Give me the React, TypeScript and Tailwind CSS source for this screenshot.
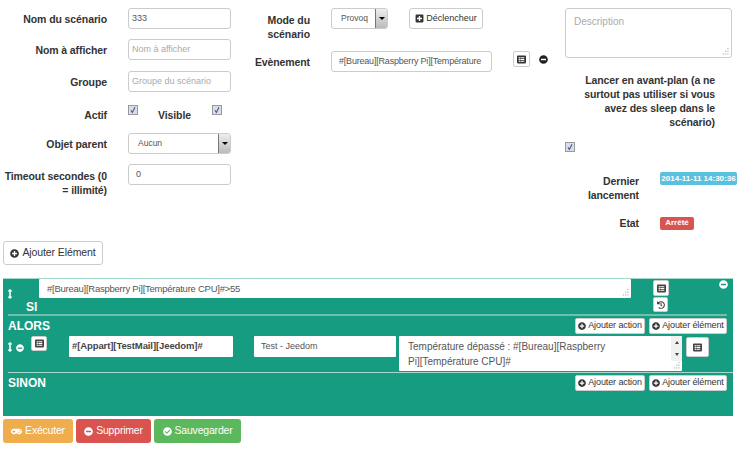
import { ReactNode } from "react"
import { FaArrowsAltV, FaCheckCircle, FaGamepad, FaHistory, FaListAlt, FaMinusCircle, FaPlusCircle, FaPlusSquare } from "react-icons/fa"

function Checkbox() {
  return (
    <div className="w-[10px] h-[10px] border border-[#9a9a9a] bg-[#dcdde4] flex items-center justify-center shrink-0">
      <svg viewBox="0 0 10 10" className="w-[8px] h-[8px]">
        <path d="M2.5 5.5 L4.2 8 L7.5 1.5" fill="none" stroke="#3d5fa8" strokeWidth="1.4" />
      </svg>
    </div>
  )
}

function Label({ className, children }: { className: string; children: ReactNode }) {
  return <div className={`text-right font-bold text-[10.5px] leading-[14px] tracking-[-0.1px] text-[#333] ${className}`}>{children}</div>
}

function TextInput({ className, value, placeholder }: { className: string; value?: string; placeholder?: string }) {
  return (
    <div className={`h-[21px] flex items-center bg-white border border-[#ccc] rounded-[3px] px-[3px] text-[9px] whitespace-nowrap overflow-hidden ${value ? "text-[#555]" : "text-[#aaa]"} ${className}`}>
      {value || placeholder}
    </div>
  )
}

function SelectBox({ className, value }: { className: string; value: string }) {
  return (
    <div className={`h-[21px] flex bg-white border border-[#ccc] rounded-[3px] text-[8.5px] text-[#555] ${className}`}>
      <div className="flex-1 flex items-center pl-[9px]">{value}</div>
      <div className="w-[12px] border-l border-[#777] bg-gradient-to-b from-[#eee] to-[#bbb] flex items-center justify-center rounded-r-[2px]">
        <div className="w-0 h-0 border-l-[3px] border-r-[3px] border-t-[3px] border-l-transparent border-r-transparent border-t-black" />
      </div>
    </div>
  )
}

function SmallButton({ children, className }: { children: ReactNode; className: string }) {
  return (
    <div className={`flex items-center justify-center bg-white border border-[#ccc] rounded-[2px] text-[#333] whitespace-nowrap shrink-0 ${className}`}>
      {children}
    </div>
  )
}

function AddButtons() {
  return (
    <div className="flex gap-[4px] ml-auto">
      <SmallButton className="w-[70px] h-[16px] gap-[2px] text-[9px] tracking-[-0.1px]">
        <FaPlusCircle className="text-[8px]" /> Ajouter action
      </SmallButton>
      <SmallButton className="w-[78px] h-[16px] gap-[2px] text-[9px] tracking-[-0.1px]">
        <FaPlusCircle className="text-[8px]" /> Ajouter élément
      </SmallButton>
    </div>
  )
}

function Grip() {
  return <div className="w-[10px] h-[10px] flex items-center justify-center"><FaArrowsAltV className="text-white text-[10px]" /></div>
}

function Resize() {
  return (
    <svg viewBox="0 0 10 10" className="absolute right-[1px] bottom-[1px] w-[9px] h-[9px]">
      <g fill="#bbb">
        <rect x="7" y="1" width="1.4" height="1.4" />
        <rect x="4.5" y="4" width="1.4" height="1.4" />
        <rect x="7" y="4" width="1.4" height="1.4" />
        <rect x="2" y="7" width="1.4" height="1.4" />
        <rect x="4.5" y="7" width="1.4" height="1.4" />
        <rect x="7" y="7" width="1.4" height="1.4" />
      </g>
    </svg>
  )
}

function ActionButton({ className, children }: { className: string; children: ReactNode }) {
  return (
    <div className={`h-[24px] flex items-center justify-center gap-[3px] rounded-[3px] text-white text-[10.5px] tracking-[-0.2px] ${className}`}>
      {children}
    </div>
  )
}

export default function App() {
  return (
    <div className="w-[740px] h-[454px] bg-white overflow-hidden font-['Liberation_Sans',Arial,sans-serif]">
      <div className="h-[241px] flex pt-[8px]">
        {/* left column */}
        <div className="w-[240px] pl-[3px] flex flex-col">
          <div className="flex gap-[21px] items-center h-[21px]">
            <Label className="w-[104px]">Nom du scénario</Label>
            <TextInput className="w-[103px] text-[9.5px]" value="333" />
          </div>
          <div className="flex gap-[21px] items-center h-[21px] mt-[10px]">
            <Label className="w-[104px]">Nom à afficher</Label>
            <TextInput className="w-[103px]" placeholder="Nom à afficher" />
          </div>
          <div className="flex gap-[21px] items-center h-[21px] mt-[11px]">
            <Label className="w-[104px]">Groupe</Label>
            <TextInput className="w-[103px]" placeholder="Groupe du scénario" />
          </div>
          <div className="flex h-[21px] mt-[13px]">
            <Label className="w-[104px] pt-[3px]">Actif</Label>
            <div className="ml-[21px]"><Checkbox /></div>
            <Label className="w-[53px] pt-[3px]">Visible</Label>
            <div className="ml-[21px]"><Checkbox /></div>
          </div>
          <div className="flex gap-[21px] items-center h-[21px] mt-[7px]">
            <Label className="w-[104px]">Objet parent</Label>
            <SelectBox className="w-[103px]" value="Aucun" />
          </div>
          <div className="flex gap-[21px] mt-[10px]">
            <Label className="w-[104px] pt-[5px]">Timeout secondes (0 = illimité)</Label>
            <TextInput className="w-[103px] pl-[7px]" value="0" />
          </div>
        </div>
        {/* middle column */}
        <div className="w-[325px] flex flex-col">
          <div className="flex">
            <Label className="w-[70px] pt-[5px]">Mode du scénario</Label>
            <SelectBox className="w-[57px] ml-[21px]" value="Provoq" />
            <SmallButton className="w-[74px] h-[21px] ml-[21px] gap-[2px] text-[9px] rounded-[3px]">
              <FaPlusSquare className="text-[9px]" /> Déclencheur
            </SmallButton>
          </div>
          <div className="flex items-start mt-[10px]">
            <Label className="w-[70px] pt-[4px]">Evènement</Label>
            <TextInput className="w-[161px] ml-[21px] pl-[7px] tracking-[-0.2px]" value="#[Bureau][Raspberry Pi][Température" />
            <SmallButton className="w-[17px] h-[16px] ml-[21px]"><FaListAlt className="text-[9px]" /></SmallButton>
            <FaMinusCircle className="text-[9px] text-[#222] ml-[9px] mt-[4px]" />
          </div>
        </div>
        {/* right column */}
        <div className="flex-1 flex flex-col">
          <div className="relative w-[167px] h-[50px] border border-[#ccc] rounded-[3px] pl-[8px] pt-[5px] text-[10px] text-[#aaa]">
            Description
            <Resize />
          </div>
          <Label className="w-[150px] mt-[15px]">Lancer en avant-plan (a ne surtout pas utiliser si vous avez des sleep dans le scénario)</Label>
          <div className="mt-[13px]"><Checkbox /></div>
          <div className="flex mt-[20px]">
            <Label className="w-[74px] pt-[2px]">Dernier lancement</Label>
            <div className="ml-[21px] w-[77px] h-[13px] rounded-[2px] bg-[#5bc0de] text-white font-bold text-[8px] flex items-center justify-center whitespace-nowrap">2014-11-11 14:30:36</div>
          </div>
          <div className="flex items-center mt-[14px]">
            <Label className="w-[74px]">Etat</Label>
            <div className="ml-[21px] w-[34px] h-[13px] rounded-[2px] bg-[#d9534f] text-white font-bold text-[8px] flex items-center justify-center">Arrêté</div>
          </div>
        </div>
      </div>

      <div className="pl-[3px] h-[37px]">
        <SmallButton className="w-[100px] h-[24px] gap-[3px] text-[10.5px] tracking-[-0.1px] rounded-[3px]">
          <FaPlusCircle className="text-[9px]" /> Ajouter Elément
        </SmallButton>
      </div>

      {/* scenario block */}
      <div className="relative ml-[3px] w-[730px] h-[138px] bg-[#169c80] border-t border-[#a5d8cc] px-[5px] flex flex-col">
        <FaMinusCircle className="absolute right-[5px] top-[1px] text-white text-[9px]" />
        <div className="flex h-[35px]">
          <div className="w-[31px] relative">
            <div className="pt-[10px] -ml-[3px]"><Grip /></div>
            <div className="font-bold text-white text-[12px] leading-[12px] ml-[18px] mt-[2px]">SI</div>
          </div>
          <div className="relative w-[592px] h-[19px] bg-white rounded-[1px] pl-[8px] pt-[3px] text-[9.5px] tracking-[-0.25px] text-[#555]">
            #[Bureau][Raspberry Pi][Température CPU]#&gt;55
            <Resize />
          </div>
          <div className="ml-[22px] pt-[1px] flex flex-col gap-[1px]">
            <SmallButton className="w-[16px] h-[16px]"><FaListAlt className="text-[9px] text-[#444]" /></SmallButton>
            <SmallButton className="w-[15px] h-[15px]"><FaHistory className="text-[8px]" /></SmallButton>
          </div>
        </div>
        <div className="h-[2px] bg-[#6fbfae] w-[719px]" />
        <div className="flex items-center h-[18px] w-[719px] mt-[1px]">
          <div className="font-bold text-white text-[12px]">ALORS</div>
          <AddButtons />
        </div>
        <div className="flex items-start h-[36px] mt-[1px]">
          <div className="flex items-center h-[22px] -ml-[3px] w-[11px]"><Grip /></div>
          <FaMinusCircle className="text-white text-[8px] mt-[8px]" />
          <SmallButton className="w-[16px] h-[15px] ml-[7px]"><FaListAlt className="text-[9px] text-[#444]" /></SmallButton>
          <div className="ml-[22px] w-[164px] h-[21px] bg-white rounded-[1px] flex items-center pl-[3px] font-bold text-[9.5px] tracking-[-0.1px] text-[#444]">#[Appart][TestMail][Jeedom]#</div>
          <div className="ml-[21px] w-[142px] h-[21px] bg-white rounded-[1px] flex items-center pl-[7px] text-[9px] text-[#555]">Test - Jeedom</div>
          <div className="relative ml-[3px] w-[283px] h-[35px] bg-white rounded-[1px] pl-[9px] pt-[4px] text-[10px] leading-[14.5px] text-[#555]">
            Température dépassé : #[Bureau][Raspberry<br />Pi][Température CPU]#
            <div className="absolute right-0 top-0 w-[11px] h-[25px] bg-[#f1f1f1] flex flex-col justify-between items-center py-[5px]">
              <div className="w-0 h-0 border-l-[2.5px] border-r-[2.5px] border-b-[3px] border-l-transparent border-r-transparent border-b-[#444]" />
              <div className="w-0 h-0 border-l-[2.5px] border-r-[2.5px] border-t-[3px] border-l-transparent border-r-transparent border-t-[#444]" />
            </div>
            <Resize />
          </div>
          <SmallButton className="w-[23px] h-[20px] ml-[4px] mt-[1px]"><FaListAlt className="text-[9px] text-[#444]" /></SmallButton>
        </div>
        <div className="h-px bg-[#a8d8cd] w-[725px]" />
        <div className="flex items-center h-[18px] w-[719px] mt-[1px]">
          <div className="font-bold text-white text-[12px]">SINON</div>
          <AddButtons />
        </div>
      </div>

      <div className="flex gap-[3px] pl-[3px] mt-[3px]">
        <ActionButton className="w-[70px] bg-[#f0ad4e]"><FaGamepad className="text-[11px]" /> Exécuter</ActionButton>
        <ActionButton className="w-[75px] bg-[#d9534f]"><FaMinusCircle className="text-[9px]" /> Supprimer</ActionButton>
        <ActionButton className="w-[87px] bg-[#5cb85c]"><FaCheckCircle className="text-[9px]" /> Sauvegarder</ActionButton>
      </div>
    </div>
  )
}
